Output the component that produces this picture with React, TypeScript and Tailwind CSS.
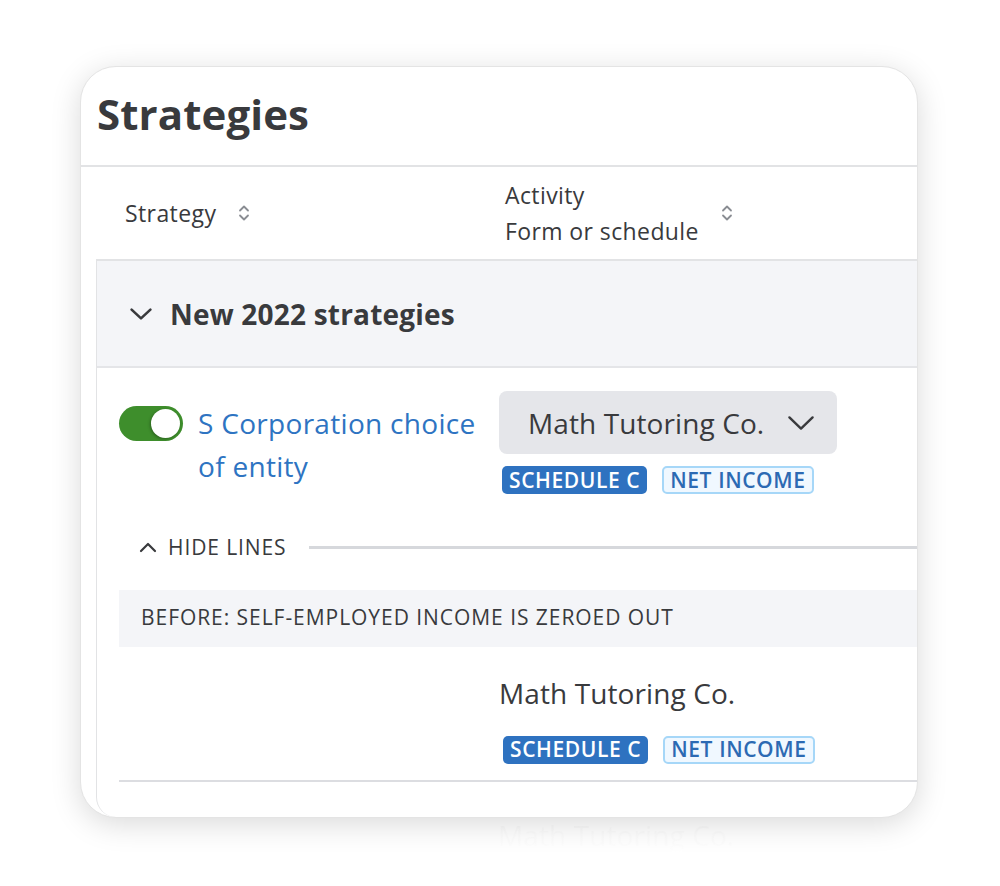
const font = { fontFamily: '"Open Sans", "Liberation Sans", sans-serif' };

function SortIcon() {
  return (
    <svg width="12" height="18" viewBox="0 0 12 18" fill="none" stroke="#8a8d93" strokeWidth="1.8" strokeLinecap="round" strokeLinejoin="round">
      <path d="M2 6.5 L6 2.5 L10 6.5" />
      <path d="M2 11.5 L6 15.5 L10 11.5" />
    </svg>
  );
}

function ChevronDown({ w, h, stroke = "#393a3d", sw = 2.6 }: { w: number; h: number; stroke?: string; sw?: number }) {
  return (
    <svg width={w} height={h} viewBox={`0 0 ${w} ${h}`} fill="none" stroke={stroke} strokeWidth={sw} strokeLinecap="round" strokeLinejoin="round">
      <path d={`M${sw} ${sw} L${w / 2} ${h - sw} L${w - sw} ${sw}`} />
    </svg>
  );
}

function Badges() {
  return (
    <div className="flex items-center gap-[15px]">
      <span className="flex h-[28px] items-center rounded-[5px] bg-[#2e72c0] px-[7px] text-[21px] font-semibold leading-none tracking-[0.6px] text-white">
        SCHEDULE C
      </span>
      <span className="flex h-[28px] items-center rounded-[5px] border-2 border-[#a6d7f8] bg-[#f0f8ff] px-[6px] text-[21px] font-semibold leading-none tracking-[0.6px] text-[#2c6ab3]">
        NET INCOME
      </span>
    </div>
  );
}

export default function App() {
  return (
    <div className="min-h-screen bg-white pl-[80px] pt-[66px] text-[#393a3d]" style={font}>
      <div className="flex h-[752px] w-[838px] flex-col overflow-hidden rounded-[36px] border border-[#e4e4e4] bg-white shadow-[0_6px_30px_rgba(0,0,0,0.15)]">
        <div className="flex h-[100px] shrink-0 items-center border-b-2 border-[#e2e3e5] pb-[4px] pl-[16px]">
          <h1 className="text-[42px] font-bold leading-none tracking-[0.1px]">Strategies</h1>
        </div>

        <div className="flex h-[92px] shrink-0 items-center text-[23px] tracking-[0.4px]">
          <div className="flex w-[424px] items-center gap-[22px] pl-[44px]">
            <span>Strategy</span>
            <SortIcon />
          </div>
          <div className="flex items-center gap-[22px]">
            <div className="leading-[36px]">
              <div>Activity</div>
              <div>Form or schedule</div>
            </div>
            <SortIcon />
          </div>
        </div>

        <div className="ml-[15px] flex flex-1 flex-col rounded-bl-[20px] border-l border-t-2 border-[#e2e3e5]">
          <div className="flex h-[107px] shrink-0 items-center gap-[17px] border-b-2 border-[#e4e5e8] bg-[#f4f5f8] pl-[32px]">
            <ChevronDown w={24} h={14} />
            <span className="text-[28px] font-bold tracking-[0.2px]">New 2022 strategies</span>
          </div>

          <div className="flex pl-[22px] pt-[23px]">
            <div className="flex w-[380px] items-start gap-[15px]">
              <div className="mt-[15px] flex h-[35px] w-[64px] shrink-0 items-center justify-end rounded-full bg-[#3e8e2c] p-[3px]">
                <div className="h-[29px] w-[29px] rounded-full bg-white shadow-[-1px_1px_3px_rgba(0,0,0,0.3)]" />
              </div>
              <div className="mt-[11px] text-[28px] font-medium leading-[43px] tracking-[0.3px] text-[#2e74c2]">
                S Corporation choice
                <br />
                of entity
              </div>
            </div>
            <div className="flex flex-col">
              <div className="flex h-[63px] w-[338px] items-center justify-between rounded-[8px] bg-[#e5e6ea] pl-[29px] pr-[22px]">
                <span className="text-[28px] font-medium tracking-[0.1px]">Math Tutoring Co.</span>
                <ChevronDown w={28} h={16} sw={2.4} />
              </div>
              <div className="ml-[3px] mt-[12px]">
                <Badges />
              </div>
            </div>
          </div>

          <div className="mt-[38px] flex items-center pl-[42px]">
            <svg width="18" height="11" viewBox="0 0 18 11" fill="none" stroke="#393a3d" strokeWidth="2.2" strokeLinecap="round" strokeLinejoin="round">
              <path d="M2 9 L9 2 L16 9" />
            </svg>
            <span className="ml-[11px] text-[21px] font-medium tracking-[0.9px]">HIDE LINES</span>
            <div className="ml-[22px] h-[3px] flex-1 bg-[#d6d8dc]" />
          </div>

          <div className="ml-[22px] mt-[26px] flex h-[57px] items-center bg-[#f4f5f8] pl-[22px]">
            <span className="text-[21px] font-medium tracking-[0.95px]">BEFORE: SELF-EMPLOYED INCOME IS ZEROED OUT</span>
          </div>

          <div className="ml-[402px] mt-[27px] flex flex-col">
            <span className="text-[28px] leading-[38px] tracking-[0.1px]">Math Tutoring Co.</span>
            <div className="ml-[4px] mt-[24px]">
              <Badges />
            </div>
          </div>

          <div className="ml-[22px] mt-[16px] h-[2px] bg-[#dcdde1]" />
        </div>
      </div>
      <div className="pl-[418px]">
        <span className="inline-block bg-gradient-to-b from-[#e0e0e0] via-[#f4f4f4] to-white bg-clip-text text-[28px] leading-[34px] tracking-[0.1px] text-transparent">
          Math Tutoring Co.
        </span>
      </div>
    </div>
  );
}
